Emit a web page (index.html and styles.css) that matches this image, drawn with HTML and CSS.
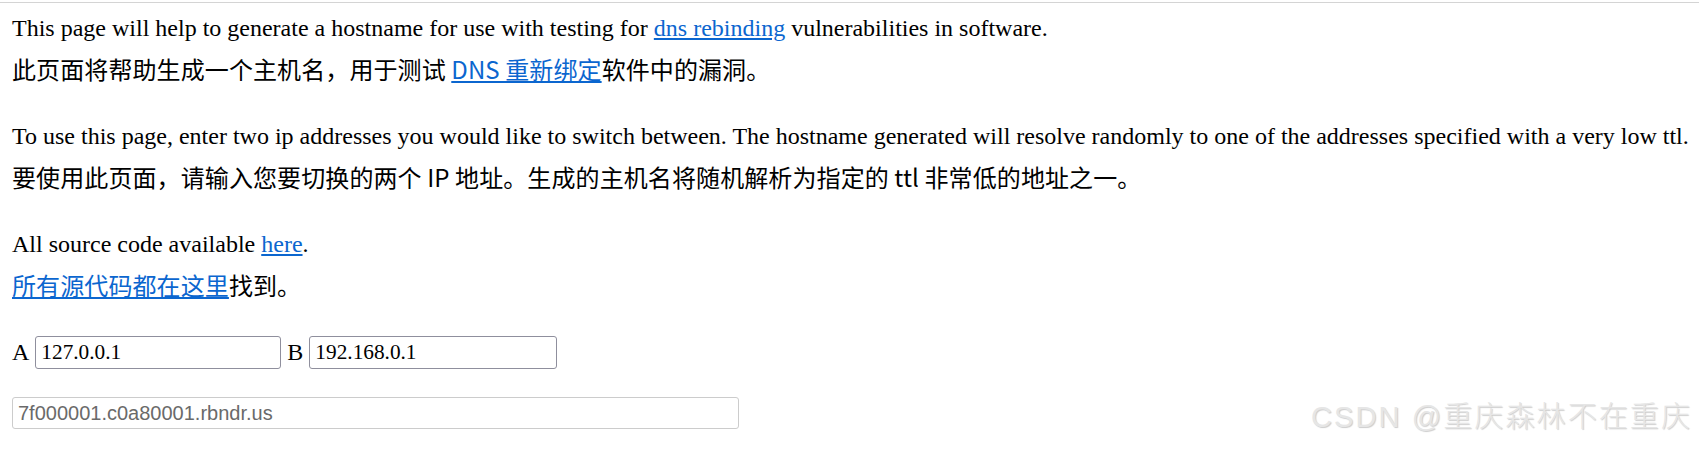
FILE: index.html
```html
<!DOCTYPE html>
<html lang="zh">
<head>
<meta charset="utf-8">
<title>rbndr</title>
<link rel="stylesheet" href="styles.css">
</head>
<body>
<div class="rule"></div>
<main class="page">
  <section class="para">
    <div class="en">This page will help to generate a hostname for use with testing for <a href="#">dns rebinding</a> vulnerabilities in software.</div>
    <div class="zh">此页面将帮助生成一个主机名，用于测试 <a href="#">DNS 重新绑定</a>软件中的漏洞。</div>
  </section>
  <section class="para">
    <div class="en">To use this page, enter two ip addresses you would like to switch between. The hostname generated will resolve randomly to one of the addresses specified with a very low ttl.</div>
    <div class="zh">要使用此页面，请输入您要切换的两个 IP 地址。生成的主机名将随机解析为指定的 ttl 非常低的地址之一。</div>
  </section>
  <section class="para">
    <div class="en">All source code available <a href="#">here</a>.</div>
    <div class="zh"><a href="#">所有源代码都在这里</a>找到。</div>
  </section>
  <div class="ips">
    <label class="lbl">A</label>
    <input class="ip ip-a" type="text" value="127.0.0.1">
    <label class="lbl">B</label>
    <input class="ip ip-b" type="text" value="192.168.0.1">
  </div>
  <div class="result-row">
    <input class="result" type="text" readonly value="7f000001.c0a80001.rbndr.us">
  </div>
</main>
<div class="watermark">CSDN @重庆森林不在重庆</div>
</body>
</html>
```
FILE: styles.css
```css
html, body {
  margin: 0;
  padding: 0;
  background: #ffffff;
}
body {
  position: relative;
  width: 1699px;
  height: 454px;
  overflow: hidden;
  color: #000;
  font-family: "Liberation Serif", "Times New Roman", serif;
  font-size: 24px;
}
.rule {
  margin-top: 2px;
  height: 0;
  border-top: 1px solid #d4d4d4;
}
.page {
  padding: 11px 12px 0 12px;
}
.para {
  margin-bottom: 26px;
}
.en {
  font-family: "Liberation Serif", "Times New Roman", serif;
  line-height: 28px;
  white-space: nowrap;
}
.zh {
  font-family: "Noto Sans CJK SC", "Microsoft YaHei", sans-serif;
  line-height: 54px;
  letter-spacing: 0.1px;
  white-space: nowrap;
}
a {
  color: #0b66cf;
  text-decoration: underline;
}
.ips {
  display: flex;
  align-items: center;
  margin-top: -2px;
  height: 33px;
}
.lbl {
  font-family: "Liberation Serif", "Times New Roman", serif;
  font-size: 24px;
  margin-right: 6px;
}
.ip {
  box-sizing: border-box;
  height: 33px;
  padding: 0 4px 0 5px;
  border: 1px solid #8f8f9d;
  border-radius: 3px;
  font-family: "Liberation Serif", "Times New Roman", serif;
  font-size: 21.3px;
  color: #000;
  background: #fff;
  outline: none;
}
.ip-a {
  width: 246px;
  margin-right: 6px;
}
.ip-b {
  width: 248px;
}
.result-row {
  margin-top: 28px;
}
.result {
  box-sizing: border-box;
  width: 727px;
  height: 32px;
  padding: 0 4px 0 5px;
  border: 1px solid #cccccc;
  border-radius: 3px;
  font-family: "Liberation Sans", Arial, sans-serif;
  font-size: 20px;
  color: #6a6a6a;
  background: #fff;
  outline: none;
}
.watermark {
  position: absolute;
  left: 1311px;
  top: 400px;
  font-family: "Liberation Sans", "Noto Sans CJK SC", sans-serif;
  font-size: 29px;
  font-weight: 300;
  line-height: 34px;
  letter-spacing: 2.1px;
  color: #e6e6e6;
  text-shadow: 1px 1px 1px rgba(0, 0, 0, 0.2);
  white-space: nowrap;
  pointer-events: none;
}
```
